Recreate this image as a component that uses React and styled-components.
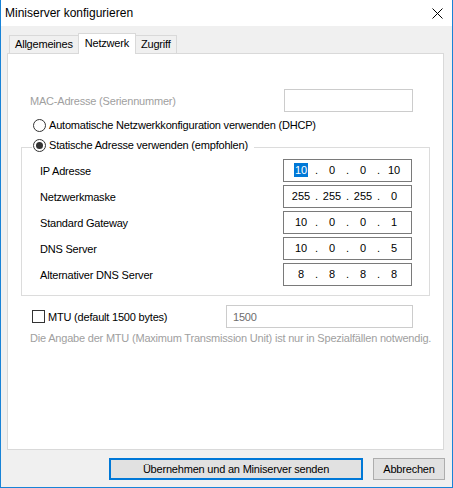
import React from "react";
import styled, { createGlobalStyle } from "styled-components";

const GlobalStyle = createGlobalStyle`
  html, body {
    margin: 0;
    padding: 0;
    background: #ffffff;
  }
  body {
    font-family: "Liberation Sans", Arial, sans-serif;
    font-size: 11px;
    letter-spacing: -0.2px;
    color: #000000;
  }
  * {
    box-sizing: border-box;
  }
`;

const Window = styled.div`
  width: 453px;
  height: 488px;
  display: flex;
  flex-direction: column;
  border: 1px solid #1883d7;
  border-top: none;
  background: #ffffff;
`;

const TitleBar = styled.div`
  height: 26px;
  display: flex;
  align-items: center;
  justify-content: space-between;
  padding: 0 9px 0 4px;
  background: #ffffff;
`;

const Title = styled.div`
  font-size: 12px;
  letter-spacing: 0;
  color: #000000;
`;

const CloseButton = styled.div`
  width: 12px;
  height: 12px;
  display: flex;
  align-items: center;
  justify-content: center;
`;

const Client = styled.div`
  flex: 1;
  display: flex;
  flex-direction: column;
  background: #f0f0f0;
  padding: 7px 8px 7px 6px;
`;

const TabStrip = styled.div`
  height: 20px;
  display: flex;
  align-items: flex-end;
  padding-left: 2px;
  position: relative;
  z-index: 1;
`;

const Tab = styled.div`
  height: ${(p) => (p.$active ? "21px" : "18px")};
  margin-bottom: ${(p) => (p.$active ? "-1px" : "0")};
  margin-right: -1px;
  padding: ${(p) => (p.$active ? "3px 6px 0 6px" : "2px 5px 0 5px")};
  background: ${(p) => (p.$active ? "#ffffff" : "#f0f0f0")};
  border: 1px solid #d9d9d9;
  border-bottom: none;
  white-space: nowrap;
  z-index: ${(p) => (p.$active ? 2 : 0)};
`;

const Panel = styled.div`
  flex: 1;
  background: #ffffff;
  border: 1px solid #d9d9d9;
  display: flex;
  flex-direction: column;
  padding: 35px 30px 0 22px;
`;

const FieldRow = styled.div`
  height: 23px;
  display: flex;
  align-items: center;
  justify-content: space-between;
`;

const Label = styled.span`
  color: ${(p) => (p.$disabled ? "#a0a0a0" : "#000000")};
`;

const TextBox = styled.div`
  width: ${(p) => p.$width || 129}px;
  height: 23px;
  border: 1px solid ${(p) => (p.$disabled ? "#cccccc" : "#7a7a7a")};
  background: #ffffff;
  display: flex;
  align-items: center;
  padding-left: 6px;
  color: #6d6d6d;
`;

const OptionRow = styled.label`
  display: flex;
  align-items: center;
  gap: 3px;
  height: 14px;
  margin-left: ${(p) => p.$indent || 0}px;
  margin-top: ${(p) => p.$top || 0}px;
`;

const Radio = styled.span`
  width: 13px;
  height: 13px;
  border-radius: 50%;
  border: 1px solid #333333;
  background: #ffffff;
  display: flex;
  align-items: center;
  justify-content: center;
  flex-shrink: 0;

  &::after {
    content: "";
    width: 7px;
    height: 7px;
    border-radius: 50%;
    background: ${(p) => (p.$checked ? "#333333" : "transparent")};
  }
`;

const CheckBox = styled.span`
  width: 13px;
  height: 13px;
  border: 1px solid #333333;
  background: #ffffff;
  flex-shrink: 0;
`;

const Group = styled.fieldset`
  margin: 6px -17px 0 -9px;
  padding: 3px 17px 9px 18px;
  border: 1px solid #dcdcdc;
  display: flex;
  flex-direction: column;
  gap: 3px;
  min-width: 0;
`;

const Legend = styled.legend`
  margin-left: -8px;
  padding: 0 6px 4px 1px;
`;

const IpBox = styled.div`
  width: 129px;
  height: 23px;
  border: 1px solid #7a7a7a;
  display: flex;
  align-items: center;
  padding: 0 0 1px 6px;
  letter-spacing: 0;
`;

const Octet = styled.span`
  width: 22px;
  text-align: center;
`;

const Selected = styled.span`
  background: #0078d7;
  color: #ffffff;
  padding: 1px 1px;
`;

const Dot = styled.span`
  width: 9px;
  text-align: center;
`;

const MtuRow = styled.div`
  margin-top: 9px;
  height: 23px;
  display: flex;
  align-items: center;
  justify-content: space-between;
`;

const MtuOption = styled.label`
  display: flex;
  align-items: center;
  gap: 3px;
  margin-left: 2px;
`;

const Hint = styled.div`
  margin-top: 4px;
  color: #a0a0a0;
  white-space: nowrap;
`;

const ButtonBar = styled.div`
  display: flex;
  justify-content: flex-end;
  gap: 10px;
  margin: 8px -1px 0 0;
`;

const Button = styled.button`
  width: ${(p) => p.$width}px;
  height: 22px;
  font-family: inherit;
  font-size: 11px;
  letter-spacing: inherit;
  color: #000000;
  background: #e1e1e1;
  border: ${(p) => (p.$default ? "2px solid #0078d7" : "1px solid #adadad")};
  padding: 0;
`;

const ipRows = [
  { label: "IP Adresse", octets: ["10", "0", "0", "10"], select: true },
  { label: "Netzwerkmaske", octets: ["255", "255", "255", "0"] },
  { label: "Standard Gateway", octets: ["10", "0", "0", "1"] },
  { label: "DNS Server", octets: ["10", "0", "0", "5"] },
  { label: "Alternativer DNS Server", octets: ["8", "8", "8", "8"] },
];

function IpField({ octets, select }) {
  return (
    <IpBox>
      {octets.map((o, i) => (
        <React.Fragment key={i}>
          {i > 0 && <Dot>.</Dot>}
          <Octet>{select && i === 0 ? <Selected>{o}</Selected> : o}</Octet>
        </React.Fragment>
      ))}
    </IpBox>
  );
}

function App() {
  return (
    <Window>
      <GlobalStyle />
      <TitleBar>
        <Title>Miniserver konfigurieren</Title>
        <CloseButton>
          <svg width="11" height="11" viewBox="0 0 11 11">
            <path d="M0.5 0.5 L10.5 10.5 M10.5 0.5 L0.5 10.5" stroke="#000" strokeWidth="1" />
          </svg>
        </CloseButton>
      </TitleBar>
      <Client>
        <TabStrip>
          <Tab>Allgemeines</Tab>
          <Tab $active>Netzwerk</Tab>
          <Tab>Zugriff</Tab>
        </TabStrip>
        <Panel>
          <FieldRow>
            <Label $disabled>MAC-Adresse (Seriennummer)</Label>
            <TextBox $disabled />
          </FieldRow>
          <OptionRow $indent={3} $top={6}>
            <Radio />
            <span>Automatische Netzwerkkonfiguration verwenden (DHCP)</span>
          </OptionRow>
          <Group>
            <Legend>
              <OptionRow>
                <Radio $checked />
                <span>Statische Adresse verwenden (empfohlen)</span>
              </OptionRow>
            </Legend>
            {ipRows.map((r) => (
              <FieldRow key={r.label}>
                <Label>{r.label}</Label>
                <IpField octets={r.octets} select={r.select} />
              </FieldRow>
            ))}
          </Group>
          <MtuRow>
            <MtuOption>
              <CheckBox />
              <span>MTU (default 1500 bytes)</span>
            </MtuOption>
            <TextBox $disabled $width={187}>1500</TextBox>
          </MtuRow>
          <Hint>
            Die Angabe der MTU (Maximum Transmission Unit) ist nur in Spezialfällen notwendig.
          </Hint>
        </Panel>
        <ButtonBar>
          <Button $default $width={254}>Übernehmen und an Miniserver senden</Button>
          <Button $width={72}>Abbrechen</Button>
        </ButtonBar>
      </Client>
    </Window>
  );
}

export default App;
